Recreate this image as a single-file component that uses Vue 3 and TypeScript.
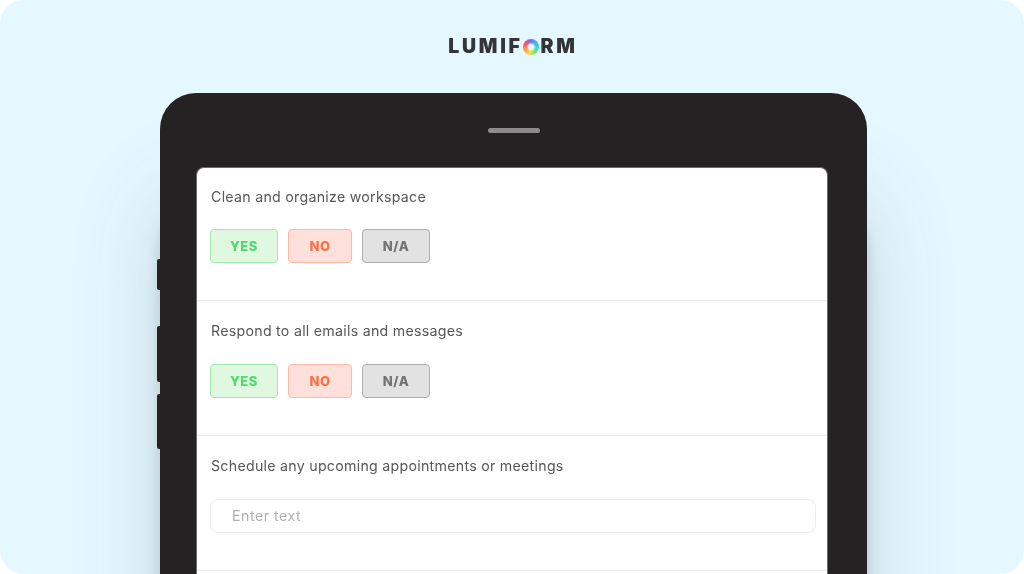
<script setup lang="ts">
interface Question {
  label: string
  kind: 'choice' | 'text'
}

const questions: Question[] = [
  { label: 'Clean and organize workspace', kind: 'choice' },
  { label: 'Respond to all emails and messages', kind: 'choice' },
  { label: 'Schedule any upcoming appointments or meetings', kind: 'text' }
]

const choices = [
  { text: 'YES', cls: 'yes' },
  { text: 'NO', cls: 'no' },
  { text: 'N/A', cls: 'na' }
]
</script>

<template>
  <main class="hero">
    <!-- Logo -->
    <header class="logo">
      <span>LUMIF</span>
      <span class="logo-ring"></span>
      <span>RM</span>
    </header>

    <!-- Tablet -->
    <div class="tablet">
      <span class="side-btn btn-a"></span>
      <span class="side-btn btn-b"></span>
      <span class="side-btn btn-c"></span>
      <div class="speaker"></div>
      <div class="screen">
        <section v-for="q in questions" :key="q.label" class="question">
          <p class="label">{{ q.label }}</p>
          <div v-if="q.kind === 'choice'" class="choices">
            <button v-for="c in choices" :key="c.text" :class="['choice', c.cls]">{{ c.text }}</button>
          </div>
          <div v-else class="input">Enter text</div>
        </section>
      </div>
    </div>
  </main>
</template>

<style>
html,
body {
  margin: 0;
  background: #ffffff;
}
</style>

<style scoped>
.hero {
  width: 1024px;
  height: 574px;
  box-sizing: border-box;
  background: #e6f8ff;
  border-radius: 24px;
  overflow: hidden;
  padding-top: 36px;
  display: flex;
  flex-direction: column;
  align-items: center;
  font-family: Inter, "Liberation Sans", sans-serif;
}

/* Logo */
.logo {
  height: 20px;
  margin-left: 2px;
  display: flex;
  align-items: center;
  font-size: 19.5px;
  font-weight: 900;
  letter-spacing: 2.7px;
  line-height: 20px;
  color: #333536;
  filter: blur(0.35px);
}

.logo-ring {
  width: 16px;
  height: 16px;
  margin: 2px 2px 0 0;
  border-radius: 50%;
  background:
    radial-gradient(circle, rgba(255, 255, 255, 0.95) 0 2px, transparent 5px),
    conic-gradient(#7a6cf0, #38b8f5 50deg, #30e0c0 100deg, #8ce85a 150deg, #ffdc3c 195deg, #ff9a3c 245deg, #ff4f6e 300deg, #7a6cf0);
}

/* Tablet */
.tablet {
  position: relative;
  width: 707px;
  height: 520px;
  margin-top: 37px;
  margin-left: 3px;
  flex-shrink: 0;
  box-sizing: border-box;
  padding: 0 39px 0 36px;
  background: #242223;
  border-radius: 36px 36px 0 0;
  box-shadow:
    0 120px 14px rgba(50, 60, 65, 0.2),
    0 100px 90px rgba(40, 60, 70, 0.17);
}

.side-btn {
  position: absolute;
  left: -3px;
  width: 3px;
  background: #242223;
  border-radius: 2px 0 0 2px;
}

.btn-a {
  top: 166px;
  height: 31px;
}

.btn-b {
  top: 233px;
  height: 56px;
}

.btn-c {
  top: 301px;
  height: 55px;
}

.speaker {
  width: 52px;
  height: 5px;
  margin: 35px 0 0 292px;
  border-radius: 3px;
  background: #8c8c8c;
}

.screen {
  margin-top: 34px;
  background: #ffffff;
  border: 1px solid #6a6a6a;
  border-bottom: 0;
  border-radius: 8px 8px 0 0;
  height: 410px;
  box-sizing: border-box;
  filter: blur(0.35px);
}

.question {
  height: 135px;
  box-sizing: border-box;
  padding: 21px 11px 0 13px;
  border-bottom: 1px solid #ececec;
}

.question:first-child {
  height: 133px;
  padding-top: 20px;
}

.question:first-child .choices {
  margin-top: 23px;
}

.label {
  margin: 0 0 0 1px;
  font-size: 14.2px;
  line-height: 18px;
  letter-spacing: 0.27px;
  color: #555759;
}

.choices {
  display: flex;
  gap: 10px;
  margin-top: 24px;
}

.choice {
  height: 34px;
  box-sizing: border-box;
  padding: 0;
  border-radius: 4px;
  border: 1px solid;
  font-family: inherit;
  font-size: 13px;
  font-weight: 800;
  letter-spacing: 0.5px;
}

.yes {
  width: 68px;
  color: #4fd96f;
  background: #e0f8e0;
  border-color: #a0e8ae;
}

.no {
  width: 64px;
  color: #ff6f45;
  background: #ffe0da;
  border-color: #ffb8a4;
}

.na {
  width: 68px;
  color: #737373;
  background: #e2e2e2;
  border-color: #aeaeae;
}

.input {
  height: 34px;
  margin-top: 24px;
  box-sizing: border-box;
  padding-left: 21px;
  border: 1px solid #ededed;
  border-radius: 8px;
  font-size: 14.2px;
  line-height: 32px;
  letter-spacing: 0.5px;
  color: #aeb1b4;
}
</style>
